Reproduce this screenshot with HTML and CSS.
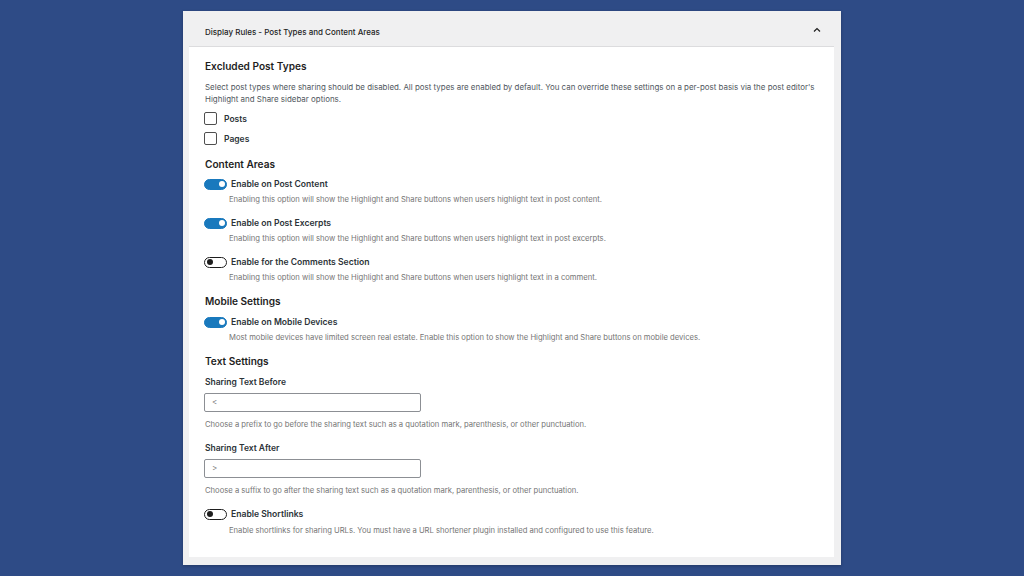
FILE: index.html
```html
<!DOCTYPE html>
<html lang="en">
<head>
<meta charset="utf-8">
<title>Display Rules</title>
<link rel="stylesheet" href="styles.css">
</head>
<body>
<div class="frame">
  <div class="panel-header">
    <span class="panel-title">Display Rules - Post Types and Content Areas</span>
    <svg class="chevron" width="8" height="6" viewBox="0 0 8 6"><path d="M1 4.5 L4 1.5 L7 4.5" fill="none" stroke="#1e1e1e" stroke-width="1.2"/></svg>
  </div>
  <div class="panel-body">
    <h2 class="heading first">Excluded Post Types</h2>
    <p class="intro">Select post types where sharing should be disabled. All post types are enabled by default. You can override these settings on a per-post basis via the post editor's Highlight and Share sidebar options.</p>
    <div class="checks">
      <label class="check"><span class="box"></span><span class="check-label">Posts</span></label>
      <label class="check"><span class="box"></span><span class="check-label">Pages</span></label>
    </div>

    <h2 class="heading after-checks">Content Areas</h2>
    <div class="toggle-row">
      <span class="toggle on"><span class="knob"></span></span><span class="toggle-label">Enable on Post Content</span>
    </div>
    <p class="help indent">Enabling this option will show the Highlight and Share buttons when users highlight text in post content.</p>
    <div class="toggle-row next">
      <span class="toggle on"><span class="knob"></span></span><span class="toggle-label">Enable on Post Excerpts</span>
    </div>
    <p class="help indent">Enabling this option will show the Highlight and Share buttons when users highlight text in post excerpts.</p>
    <div class="toggle-row next">
      <span class="toggle"><span class="knob"></span></span><span class="toggle-label">Enable for the Comments Section</span>
    </div>
    <p class="help indent">Enabling this option will show the Highlight and Share buttons when users highlight text in a comment.</p>

    <h2 class="heading">Mobile Settings</h2>
    <div class="toggle-row roomy">
      <span class="toggle on"><span class="knob"></span></span><span class="toggle-label">Enable on Mobile Devices</span>
    </div>
    <p class="help indent">Most mobile devices have limited screen real estate. Enable this option to show the Highlight and Share buttons on mobile devices.</p>

    <h2 class="heading">Text Settings</h2>
    <div class="field">
      <div class="field-label">Sharing Text Before</div>
      <div class="input">&lt;</div>
      <p class="help">Choose a prefix to go before the sharing text such as a quotation mark, parenthesis, or other punctuation.</p>
    </div>
    <div class="field next">
      <div class="field-label">Sharing Text After</div>
      <div class="input">&gt;</div>
      <p class="help">Choose a suffix to go after the sharing text such as a quotation mark, parenthesis, or other punctuation.</p>
    </div>
    <div class="toggle-row next">
      <span class="toggle"><span class="knob"></span></span><span class="toggle-label">Enable Shortlinks</span>
    </div>
    <p class="help indent last">Enable shortlinks for sharing URLs. You must have a URL shortener plugin installed and configured to use this feature.</p>
  </div>
</div>
</body>
</html>
```

FILE: styles.css
```css
* { box-sizing: border-box; }
html, body { margin: 0; padding: 0; }
body {
  background: #2e4b86;
  font-family: Inter, "Noto Sans", "Liberation Sans", sans-serif;
  color: #1e1e1e;
  height: 576px;
  overflow: hidden;
}
.frame {
  width: 658px;
  margin: 11px auto 0;
  background: #f0f0f1;
  padding: 0 7px 8px 6px;
  box-shadow: 0 1px 3px rgba(0,0,0,0.25);
}
.panel-header {
  height: 36px;
  display: flex;
  align-items: center;
  justify-content: space-between;
  padding: 6px 13px 0 16px;
  border-bottom: 1px solid #dcdcde;
}
.panel-title {
  font-size: 8px;
  font-weight: 500;
  color: #1e1e1e;
}
.chevron { display: block; margin-top: -3px; }
.panel-body {
  background: #fff;
  padding: 12px 16px 20px 16px;
}
.heading {
  margin: 10px 0 0;
  font-size: 10.1px;
  line-height: 14px;
  font-weight: 600;
}
.heading.first { margin-top: 0; }
.heading.after-checks { margin-top: 12px; }
.intro {
  margin: 8px 0 0;
  font-size: 7.95px;
  line-height: 12px;
  color: #50575e;
}
.checks {
  display: flex;
  flex-direction: column;
  gap: 7px;
  margin-top: 7px;
}
.check {
  display: flex;
  align-items: center;
  height: 13px;
  margin-left: -1px;
}
.box {
  width: 13px;
  height: 13px;
  border: 1px solid #4f4f4f;
  border-radius: 2px;
  background: #fff;
}
.check-label {
  margin-left: 7px;
  font-size: 8.5px;
  font-weight: 600;
  color: #2c3338;
}
.toggle-row {
  display: flex;
  align-items: center;
  height: 12px;
  margin-top: 7px;
  margin-left: -1px;
}
.toggle-row.roomy { margin-top: 8px; }
.toggle-row.next { margin-top: 11px; }
.toggle {
  position: relative;
  width: 23px;
  height: 11px;
  border-radius: 6px;
  border: 1px solid #1e1e1e;
  background: #fff;
}
.toggle .knob {
  position: absolute;
  top: 1.5px;
  left: 1.5px;
  width: 6px;
  height: 6px;
  border-radius: 50%;
  background: #1e1e1e;
}
.toggle.on {
  background: #1979bd;
  border-color: #1979bd;
}
.toggle.on .knob {
  background: #fff;
  left: auto;
  right: 1.5px;
}
.toggle-label {
  margin-left: 4px;
  font-size: 8.6px;
  font-weight: 600;
  color: #2c3338;
}
.help {
  margin: 4px 0 0;
  font-size: 7.65px;
  line-height: 12px;
  color: #757575;
}
.help.indent { padding-left: 24px; }
.help.last { margin-top: 5px; }
.field { margin-top: 8px; }
.field.next { margin-top: 11px; }
.field-label {
  font-size: 8.5px;
  line-height: 12px;
  font-weight: 600;
  color: #2c3338;
}
.input {
  margin-top: 5px;
  margin-left: -1px;
  width: 217px;
  height: 19px;
  border: 1px solid #8c8f94;
  border-radius: 2px;
  padding-left: 7px;
  font-size: 8px;
  line-height: 17px;
  color: #757575;
}
.field .help { margin-top: 7px; }
```
